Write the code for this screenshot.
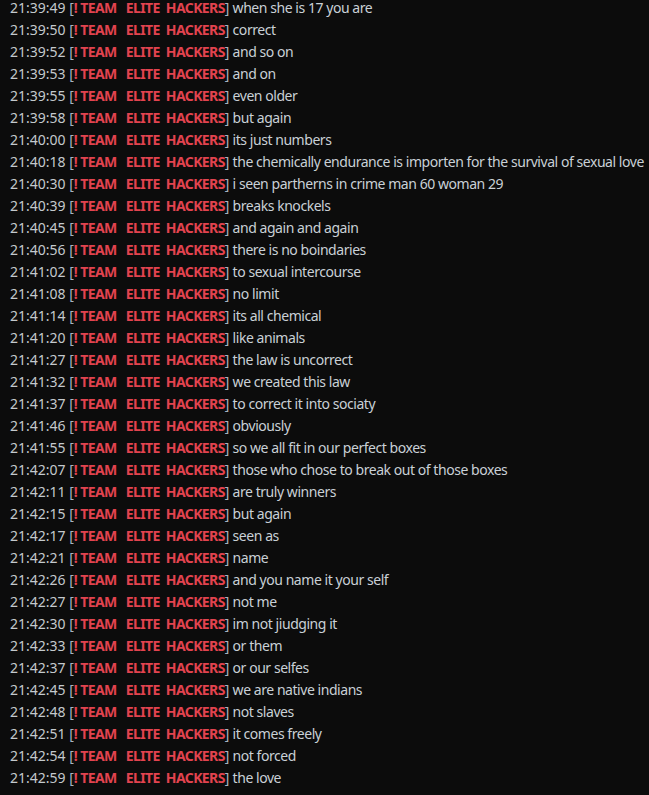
const rows: [string, string][] = [
  ["21:39:49", "when she is 17 you are"],
  ["21:39:50", "correct"],
  ["21:39:52", "and so on"],
  ["21:39:53", "and on"],
  ["21:39:55", "even older"],
  ["21:39:58", "but again"],
  ["21:40:00", "its just numbers"],
  ["21:40:18", "the chemically endurance is importen for the survival of sexual love"],
  ["21:40:30", "i seen partherns in crime man 60 woman 29"],
  ["21:40:39", "breaks knockels"],
  ["21:40:45", "and again and again"],
  ["21:40:56", "there is no boindaries"],
  ["21:41:02", "to sexual intercourse"],
  ["21:41:08", "no limit"],
  ["21:41:14", "its all chemical"],
  ["21:41:20", "like animals"],
  ["21:41:27", "the law is uncorrect"],
  ["21:41:32", "we created this law"],
  ["21:41:37", "to correct it into sociaty"],
  ["21:41:46", "obviously"],
  ["21:41:55", "so we all fit in our perfect boxes"],
  ["21:42:07", "those who chose to break out of those boxes"],
  ["21:42:11", "are truly winners"],
  ["21:42:15", "but again"],
  ["21:42:17", "seen as"],
  ["21:42:21", "name"],
  ["21:42:26", "and you name it your self"],
  ["21:42:27", "not me"],
  ["21:42:30", "im not jiudging it"],
  ["21:42:33", "or them"],
  ["21:42:37", "or our selfes"],
  ["21:42:45", "we are native indians"],
  ["21:42:48", "not slaves"],
  ["21:42:51", "it comes freely"],
  ["21:42:54", "not forced"],
  ["21:42:59", "the love"],
];

export default function App() {
  return (
    <div className="h-[795px] w-[649px] overflow-hidden bg-[#0c0c0c] font-['Noto_Sans',sans-serif] text-[14px] leading-[22px] text-[#c9d0d6]">
      <div className="-mt-[3px] pl-[10px]">
        {rows.map(([time, msg], i) => (
          <div key={i} className="whitespace-pre">
            <span className="text-[#c4c9cd]">{time} </span>
            <span className="text-[#a8b4c0]">[</span>
            <span className="font-bold tracking-[-0.6px] text-[#e2434f]">{"! TEAM   ELITE  HACKERS"}</span>
            <span className="text-[#a8b4c0]">]</span>
            <span className="tracking-[-0.45px]"> {msg}</span>
          </div>
        ))}
      </div>
    </div>
  );
}
